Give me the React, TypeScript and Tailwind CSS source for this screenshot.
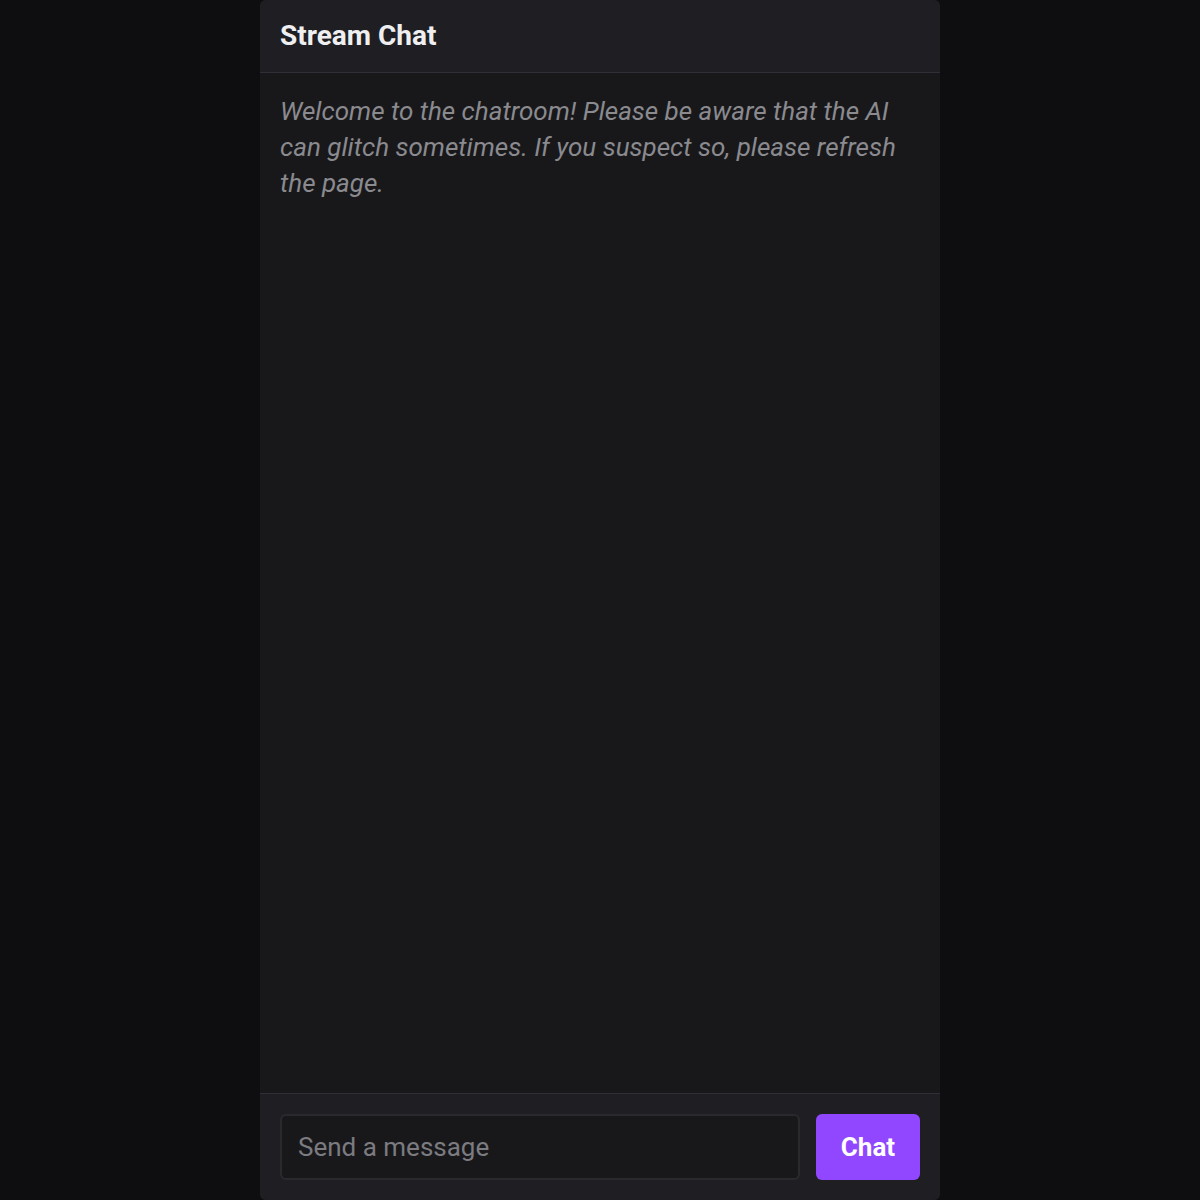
const App = () => {
  return (
    <div
      className="flex h-[1200px] w-full justify-center bg-[#0e0e10]"
      style={{ fontFamily: "Roboto, 'Liberation Sans', sans-serif" }}
    >
      <section className="flex h-full w-[680px] flex-col overflow-hidden rounded-md bg-[#18181b]">
        <header className="flex h-[73px] shrink-0 items-center border-b border-[#2f2f35] bg-[#1f1f23] px-5">
          <h1 className="text-[28px] font-bold text-[#efeff1]">Stream Chat</h1>
        </header>

        <div className="flex-1 px-5 pt-5">
          <p className="text-[26px] leading-[36px] italic text-[#8a8a8f]">
            Welcome to the chatroom! Please be aware that the AI can glitch
            sometimes. If you suspect so, please refresh the page.
          </p>
        </div>

        <form
          className="flex shrink-0 gap-4 border-t border-[#2f2f35] bg-[#1f1f23] p-5"
          onSubmit={(e) => e.preventDefault()}
        >
          <input
            type="text"
            placeholder="Send a message"
            className="h-[66px] flex-1 rounded-md border-2 border-[#2a2a2e] bg-[#18181b] px-4 text-[26px] text-[#efeff1] placeholder:text-[#7b7b80] focus:outline-none"
          />
          <button
            type="submit"
            className="h-[66px] w-[104px] rounded-md bg-[#9147ff] text-[26px] font-bold text-white"
          >
            Chat
          </button>
        </form>
      </section>
    </div>
  )
}

export default App
